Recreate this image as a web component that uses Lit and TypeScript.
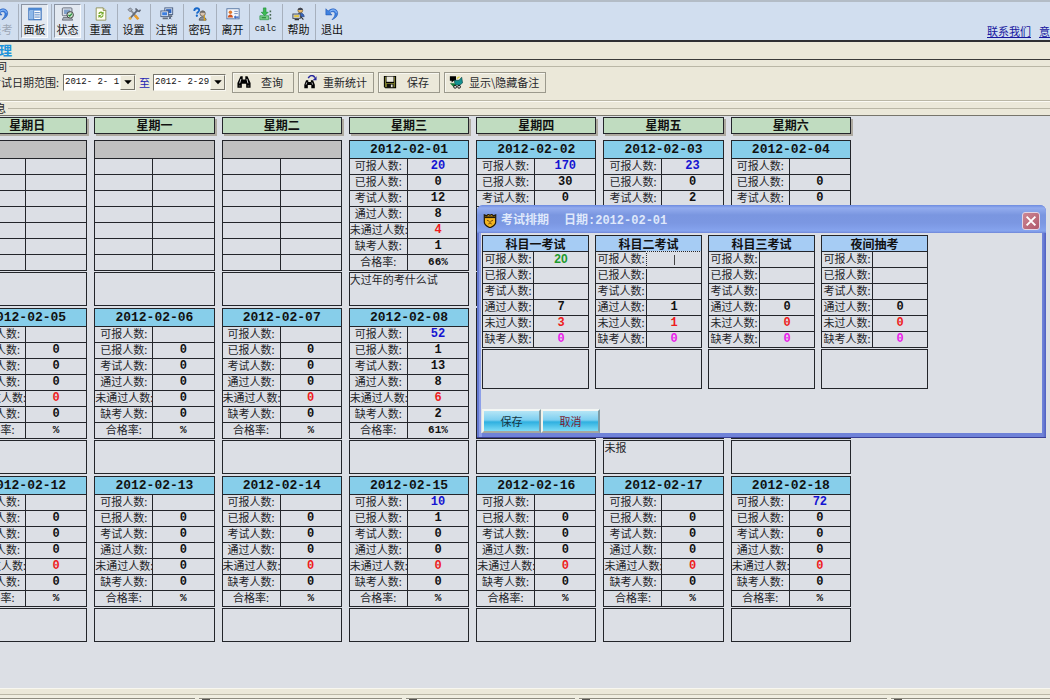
import { LitElement, html, css, svg, nothing } from "lit";
import { customElement } from "lit/decorators.js";
import { classMap } from "lit/directives/class-map.js";

const undo = svg`<path d="M1 2v7h7L5.600 6.600C8 4.600 11 5 11.400 7.600c.3 2-1 4.400-3.400 6.900 4-1.600 6.700-4.300 6.400-8C14 1.900 8 .4 3.600 4.600z" fill="#3f82e0" stroke="#1f55b5" stroke-width=".7"/><path d="M5.500 5.200C8.500 2.400 12.500 3 13 6.500" fill="none" stroke="#a6cbff" stroke-width="1"/>`;

const ICONS: Record<string, unknown> = {
  undo,
  panel: svg`<rect x="1" y="1.500" width="14" height="13" fill="#fff" stroke="#3d74bd" stroke-width="1.400"/><rect x="1" y="1.500" width="14" height="2.600" fill="#4d8ad6"/><rect x="2" y="4.500" width="4" height="9.500" fill="#8db8ea"/><path d="M7.500 6.500h6M7.500 9h6M7.500 11.500h6M6.500 4v10" stroke="#3d74bd" stroke-width="1"/>`,
  status: svg`<rect x="1.500" y="1" width="11" height="9" rx="1" fill="#d8dde5" stroke="#5d6675"/><rect x="3.500" y="3" width="7" height="5" fill="#7f9fc9"/><path d="M2.500 12h9l2 3H1.500z" fill="#a9afb8" stroke="#555b67" stroke-width=".8"/><circle cx="10.500" cy="9" r="3.700" fill="#cfe3cd" stroke="#333"/><path d="M8.500 9l1.500 1.500L12.500 7.500" stroke="#1f8e35" stroke-width="1.400" fill="none"/>`,
  reset: svg`<path d="M2.500 1h8l3 3v11h-11z" fill="#fffef0" stroke="#8a8d50"/><path d="M10.500 1v3h3" fill="#d7d9a8" stroke="#8a8d50"/><path d="M5 8a3 3 0 015-2l1-1v3.500H7.500L9 7.200A1.700 1.700 0 006.500 8zM11 9.500a3 3 0 01-5 2l-1 1V9.200h3.500L7 10.500a1.700 1.700 0 002.500-1z" fill="#74a92c"/>`,
  tools: svg`<path d="M3 2l9.500 11.500" stroke="#8a8f98" stroke-width="2.200"/><path d="M9 9.500l4 4.500" stroke="#e89b28" stroke-width="3"/><path d="M12.500 3L3 13.500" stroke="#626a78" stroke-width="2"/><path d="M10 1.500l1 2.500 3 1 1.500-2" fill="none" stroke="#626a78" stroke-width="1.800"/><path d="M1 3l3-2 2 2-2.500 2.500z" fill="#aab1bc" stroke="#5e6571" stroke-width=".7"/><circle cx="3.500" cy="13" r="1.700" fill="#e2b04a"/>`,
  logoff: svg`<rect x="5.500" y="1" width="9" height="7.500" fill="#d8e4f4" stroke="#45597c"/><rect x="7" y="2.500" width="6" height="4.500" fill="#2d63bd"/><rect x="1" y="4.500" width="8.500" height="6.500" fill="#e4ebf5" stroke="#45597c"/><rect x="2.500" y="6" width="5.500" height="3.500" fill="#3d7fe0"/><path d="M3 13h6M10 10.500h4" stroke="#66707f" stroke-width="2"/><path d="M10 11l3 3M13 11l-3 3" stroke="#4c5b77" stroke-width="1"/>`,
  password: svg`<path d="M1.500 4.500C1.500.5 7.500.5 7 4c-.2 1.700-2.200 1.700-2.500 3.600" fill="none" stroke="#1667c9" stroke-width="2.100"/><circle cx="4.400" cy="10" r="1.300" fill="#1667c9"/><circle cx="11" cy="7.500" r="3" fill="#d8c3ae" stroke="#6d655d"/><path d="M8 6.500c1-3 5.500-3 6 0" fill="#6f6a64"/><path d="M7 15c.3-5 7.700-5 8 0z" fill="#8b929e" stroke="#555"/><path d="M13 9.500v5.500l1.500-.8" stroke="#d9a21c" fill="none" stroke-width="1.300"/>`,
  leave: svg`<rect x="1" y="2" width="14" height="11.500" fill="#f4f7fc" stroke="#50709f"/><circle cx="5" cy="6" r="2" fill="#e07a2f"/><path d="M2 12c.3-4.500 5.700-4.500 6 0z" fill="#ce5423"/><path d="M9.500 5h4M9.500 7.500h4" stroke="#6e87b3"/><path d="M9 11.500l2-2v1.300h3.500v1.500H11v1.300z" fill="#2a5fc0"/>`,
  calc: svg`<path d="M5 1h3v5h2.500L6.500 10l-4-4H5z" fill="#3dbb53" stroke="#1c8a36" stroke-width=".7"/><path d="M1 10h10v4.500H1z" fill="#7ed28a" stroke="#2b9045" stroke-width=".8"/><path d="M3 12.300h5" stroke="#1c7a32" stroke-width="1.200"/><path d="M13 4v2M13 8v2M13 12v2" stroke="#4a6a55" stroke-width="1.800"/>`,
  help: svg`<circle cx="9.500" cy="4" r="2.700" fill="#e8b96a" stroke="#775a22" stroke-width=".8"/><path d="M6.500 3.500C7 0 12 0 12.500 3.500z" fill="#3f4656"/><path d="M5.500 11c.3-5.500 8.200-5.500 8.500 0z" fill="#3865bb" stroke="#26447e" stroke-width=".7"/><rect x="1" y="8" width="8.500" height="5" fill="#c9cfda" stroke="#3e444f"/><rect x="2.500" y="9.300" width="5.500" height="2.300" fill="#e4c640"/><path d="M10 11l3 3.500M3 14.500h5" stroke="#333" stroke-width="1.300"/>`,
  find: svg`<path d="M4 1.500h2.500V5h3V1.500H12L15.500 9v5.500h-5V10h-5v4.500h-5V9z" fill="#000"/><path d="M3 9.500l1.500-5M12.500 9.500L11.300 4.500" stroke="#fff" stroke-width=".9"/><path d="M2 12.500h2M12 12.500h2" stroke="#8c8c84" stroke-width=".9"/>`,
  recount: svg`<path d="M3.500 6h2.500v2h3V6h2.500l2 5v4H9.500v-3.500h-4V15h-4v-4z" fill="#000"/><path d="M3.500 11l.8-2.500M11 11l-.8-2.500" stroke="#fff" stroke-width=".8"/><path d="M6 3.500C8-.2 12-.2 13.500 3" fill="none" stroke="#26269c" stroke-width="1.700"/><path d="M15.500 1.500V6H11z" fill="#26269c"/>`,
  save: svg`<path d="M1 1h14v14H2.500L1 13.500z" fill="#000"/><path d="M2.200 2h1.300v7h9V2h1.300v12H2.200z" fill="#77772a"/><rect x="4" y="1.800" width="8" height="6" fill="#eceade"/><rect x="4.500" y="10.200" width="7.500" height="4" fill="#111"/><rect x="9" y="10.900" width="2" height="3" fill="#e6e4d8"/>`,
  toggle: svg`<path d="M1 1.500h7v5H5.500L3 8.500v-2H1z" fill="#000"/><path d="M6 6h5.500l3-3.500L15.500 9l-3 2.500H7z" fill="#149191" stroke="#063f3f" stroke-width=".7"/><path d="M1 9.500h5l1.500 2-2 2.500z" fill="#167d3a"/><path d="M9 4l3-2" stroke="#d9d03a" stroke-width="1.600"/><circle cx="7" cy="13.500" r="1.600" fill="#eee" stroke="#000"/><circle cx="11.500" cy="13.500" r="1.600" fill="#eee" stroke="#000"/>`,
  shield: svg`<path d="M1.500 1l2.500 1 2-1.500L8 1.500l2-1L12 2l2.500-1v8c0 3.500-3 5.200-6.500 6.700C4.500 14.200 1.500 12.500 1.500 9z" fill="#f3b51f" stroke="#231a08" stroke-width="1.400"/><path d="M2 3.700h12" stroke="#231a08" stroke-width="2"/><path d="M4.500 7l2.500 1.300M11.500 7L9 8.300M6 11.500l2-1.300 2 1.300M8 8v2" stroke="#7b4a0c" stroke-width="1.100" fill="none"/>`,
  close: svg`<path d="M3 3l10 10M13 3L3 13" stroke="#fff" stroke-width="2.200"/>`,
  arrow: svg`<path d="M3 5.500h10L8 11z" fill="#000"/>`,
};

const icon = (name: string) =>
  html`<svg class="icon" viewBox="0 0 16 16" aria-hidden="true">${ICONS[name]}</svg>`;

const TOOLS = [
  { label: "退考", icon: "undo", off: true },
  { label: "面板", icon: "panel", pressed: true },
  { label: "状态", icon: "status", pressed: true },
  { label: "重置", icon: "reset" },
  { label: "设置", icon: "tools" },
  { label: "注销", icon: "logoff" },
  { label: "密码", icon: "password" },
  { label: "离开", icon: "leave" },
  { label: "calc", icon: "calc" },
  { label: "帮助", icon: "help" },
  { label: "退出", icon: "undo" },
];

const WEEKDAYS = ["日", "一", "二", "三", "四", "五", "六"].map((d) => "星期" + d);
const LABELS = ["可报人数:", "已报人数:", "考试人数:", "通过人数:", "未通过人数:", "缺考人数:", "合格率:"];

interface Day {
  date?: string;
  values: string[];
  note?: string;
  plain?: boolean;
}

const zeros = (open = "", taken = "0") => [open, taken, "0", "0", "0", "0", "%"];
const day = (n: number, values = zeros(), extra: Partial<Day> = {}): Day => ({
  date: "2012-02-" + String(n).padStart(2, "0"),
  values,
  ...extra,
});
const blank: Day = { values: [] };

const DAYS: Day[] = [
  blank,
  blank,
  blank,
  day(1, ["20", "0", "12", "8", "4", "1", "66%"], { note: "大过年的考什么试" }),
  day(2, ["170", "30", "0", "0", "0", "0", "%"]),
  day(3, ["23", "0", "2", "0", "0", "0", "%"]),
  day(4),
  day(5),
  day(6, zeros(), { plain: true }),
  day(7),
  day(8, ["52", "1", "13", "8", "6", "2", "61%"]),
  day(9),
  day(10, zeros(), { note: "未报" }),
  day(11),
  day(12),
  day(13, zeros(), { plain: true }),
  day(14),
  day(15, zeros("10", "1")),
  day(16),
  day(17),
  day(18, zeros("72")),
];

const SUBJECT_LABELS = ["可报人数:", "已报人数:", "考试人数:", "通过人数:", "未过人数:", "缺考人数:"];
const SUBJECTS = [
  { name: "科目一考试", values: ["20", "", "", "7", "3", "0"] },
  { name: "科目二考试", values: ["", "", "", "1", "1", "0"], editing: true },
  { name: "科目三考试", values: ["", "", "", "0", "0", "0"] },
  { name: "夜间抽考", values: ["", "", "", "0", "0", "0"] },
];

const base = css`
  * {
    box-sizing: border-box;
  }
  button,
  input,
  textarea {
    font: inherit;
    color: inherit;
    margin: 0;
    padding: 0;
    border: 0;
    border-radius: 0;
    background: none;
  }
  .icon {
    display: block;
    flex: none;
    width: 14px;
    height: 14px;
  }
  table {
    width: 100%;
    border-collapse: collapse;
    table-layout: fixed;
  }
  th,
  td {
    height: 16px;
    padding: 0;
    border: 1px solid #23252a;
    line-height: 15px;
    text-align: center;
    font-weight: normal;
    white-space: nowrap;
  }
  th[scope] {
    padding-bottom: 2px;
    line-height: 13px;
  }
  td {
    font: bold 12px/15px "Liberation Mono", monospace;
    color: #111;
  }
  .note {
    display: block;
    width: 100%;
    resize: none;
    overflow: hidden;
    border: 1px solid #23252a;
    line-height: 12px;
    outline: none;
  }
`;

@customElement("day-card")
class DayCard extends LitElement {
  static properties = { day: { attribute: false } };
  declare day: Day;

  static styles = [
    base,
    css`
      :host {
        display: block;
        min-width: 0;
      }
      .date {
        height: 18px;
        background: #87ceea;
        font: bold 13px/17px "Liberation Mono", monospace;
        color: #111;
      }
      .none {
        background: #c0c0c0;
      }
      .label {
        width: 58px;
      }
      .open {
        color: #1414d2;
      }
      .fail {
        color: #ee1c1c;
      }
      .rate {
        font-size: 11px;
      }
      .note {
        height: 34px;
        margin-top: 1px;
      }
    `,
  ];

  render() {
    const { date, values, note, plain } = this.day;
    return html`
      <table>
        <colgroup><col class="label" /><col /></colgroup>
        <tr><th colspan="2" class=${classMap({ date: true, none: !date })}>${date ?? nothing}</th></tr>
        ${LABELS.map(
          (label, i) => html`<tr>
            <th scope="row">${date ? label : nothing}</th>
            <td class=${classMap({ open: i === 0, fail: i === 4 && !plain, rate: i === 6 })}>${values[i]}</td>
          </tr>`
        )}
      </table>
      <textarea class="note" aria-label="备注" .value=${note ?? ""}></textarea>
    `;
  }
}

@customElement("exam-dialog")
class ExamDialog extends LitElement {
  static styles = [
    base,
    css`
      :host {
        display: flex;
        flex-direction: column;
        padding: 0 4px 4px;
        border-radius: 6px 6px 0 0;
        background: linear-gradient(90deg, #6478cf 0 2px, #8d9fe8 2px 5px, #6f82d8 5px calc(100% - 3px), #4f5fc0);
        border-bottom: 1px solid #3a3f96;
      }
      .bar {
        display: flex;
        align-items: center;
        gap: 4px;
        height: 28px;
        margin: 0 -4px;
        padding: 3px 6px 0;
        border-radius: 6px 6px 0 0;
        background: linear-gradient(#6d8be0, #93acee 3px, #7a96e0 10px, #7b97e2 18px, #86a4ee 26px, #6f86d8);
        color: #dfe8fb;
        font: bold 12px/16px "Liberation Mono", "Noto Sans CJK SC", monospace;
      }
      .name {
        margin-right: 11px;
      }
      .close {
        display: flex;
        align-items: center;
        justify-content: center;
        width: 18px;
        height: 18px;
        margin-left: auto;
        border: 1px solid #e3d5e4;
        border-radius: 3px;
        background: linear-gradient(135deg, #cc8795, #b0586a);
      }
      .body {
        flex: 1;
        display: flex;
        flex-direction: column;
        justify-content: space-between;
        padding: 2px 1px 0;
        background: #dcdfe5;
      }
      .subjects {
        display: grid;
        grid-template-columns: repeat(4, 107px);
        gap: 6px;
      }
      .subject {
        background: #a6ccf4;
        font: bold 12px/15px "Noto Sans CJK SC", sans-serif;
        color: #111;
      }
      .label {
        width: 51px;
      }
      .open {
        color: #1c9a2c;
        font-family: "Liberation Sans", sans-serif;
      }
      .fail {
        color: #ee1c1c;
      }
      .absent {
        color: #ea1cea;
      }
      .editing {
        outline: 1px dotted #dcdfe5;
      }
      .caret {
        display: block;
        width: 1px;
        height: 10px;
        margin: 0 auto;
        background: #444;
      }
      .note {
        height: 40px;
        margin-top: 1px;
      }
      .actions {
        display: flex;
      }
      .action {
        width: 59px;
        height: 24px;
        border: 2px solid;
        border-color: #f3f6f4 #7f9ba4 #a5a89e #f3f3ea;
        background: linear-gradient(#b5e5f6, #7dcff0 45%, #2fb0e0 55%, #7ddcf6);
        color: #15333f;
      }
      .cancel {
        color: #7a1f35;
      }
    `,
  ];

  render() {
    return html`
      <div class="bar">
        ${icon("shield")}
        <span class="name">考试排期</span>
        <span>日期:2012-02-01</span>
        <button class="close" aria-label="关闭">${icon("close")}</button>
      </div>
      <div class="body">
        <div class="subjects">
          ${SUBJECTS.map(
            (s) => html`<div>
              <table>
                <colgroup><col class="label" /><col /></colgroup>
                <tr><th colspan="2" class="subject">${s.name}</th></tr>
                ${SUBJECT_LABELS.map((label, i) => {
                  const editing = i === 0 && !!s.editing;
                  return html`<tr>
                    <th scope="row">${label}</th>
                    <td class=${classMap({ open: i === 0, fail: i === 4, absent: i === 5, editing })}>
                      ${editing ? html`<span class="caret"></span>` : s.values[i]}
                    </td>
                  </tr>`;
                })}
              </table>
              <textarea class="note" aria-label=${s.name + "备注"}></textarea>
            </div>`
          )}
        </div>
        <div class="actions">
          <button class="action">保存</button>
          <button class="action cancel">取消</button>
        </div>
      </div>
    `;
  }
}

@customElement("app-root")
class AppRoot extends LitElement {
  static styles = [
    base,
    css`
      :host {
        position: relative;
        display: flex;
        flex-direction: column;
        height: 100vh;
        overflow: hidden;
        background: #ebe8d9;
        color: #25262a;
        font: 11px/13px "Noto Sans CJK SC", sans-serif;
      }
      .toolbar {
        display: flex;
        flex: none;
        height: 42px;
        margin-left: -14px;
        padding-top: 2px;
        border-top: 2px solid #b3bcc6;
        border-bottom: 2px solid #2e2f33;
        background: #d1deef;
      }
      .slot {
        flex: none;
        width: 33px;
        padding: 0 3px 0 2px;
        border-right: 1px solid #a7b0bd;
      }
      .slot:last-of-type {
        border-right: 0;
      }
      .tool {
        display: flex;
        flex-direction: column;
        align-items: center;
        gap: 1px;
        width: 100%;
        height: 34px;
        padding-top: 2px;
        border: 1px solid transparent;
        line-height: 14px;
        color: #111;
        white-space: nowrap;
      }
      .pressed {
        border-color: #8b94a3 #f7f9fc #f7f9fc #8b94a3;
        background: #e3e9f1;
      }
      .off {
        color: #9da7b5;
      }
      .latin {
        font-family: "Liberation Mono", monospace;
        font-size: 9px;
      }
      .links {
        display: flex;
        gap: 8px;
        margin-left: auto;
        padding-top: 21px;
        white-space: nowrap;
      }
      .links a {
        color: #1717a0;
      }
      .heading {
        flex: none;
        height: 18px;
        margin: 0 0 0 -14px;
        border-bottom: 1px solid #3a3a38;
        font: bold 13px/16px "Noto Sans CJK SC", sans-serif;
        color: #1d93dc;
      }
      fieldset {
        min-width: 0;
        margin: 0 0 0 -20px;
        padding: 0;
        border: 1px solid #bab7a6;
        border-right: 0;
        box-shadow: 0 1px 0 #fbfaf4;
      }
      legend {
        margin-left: 4px;
        padding: 0 2px 0 0;
      }
      .filters {
        flex: none;
      }
      .row {
        display: flex;
        align-items: center;
        gap: 3px;
        height: 27px;
        padding: 0 0 9px 9px;
        white-space: nowrap;
      }
      .range {
        margin-right: 1px;
      }
      .to {
        color: #2525b4;
      }
      .combo {
        display: flex;
        width: 73px;
        height: 17px;
        border: 1px solid;
        border-color: #77756b #f8f7f0 #f8f7f0 #77756b;
        background: #fff;
      }
      .date {
        flex: 1;
        min-width: 0;
        padding-left: 1px;
        font: 9px/15px "Liberation Mono", monospace;
        color: #111;
      }
      .drop {
        display: flex;
        align-items: center;
        justify-content: center;
        width: 15px;
        border: 1px solid;
        border-color: #f8f7f0 #77756b #77756b #f8f7f0;
        background: #ebe8d9;
      }
      .drop .icon {
        width: 12px;
        height: 12px;
      }
      .buttons {
        display: flex;
        gap: 4px;
        margin-left: 3px;
      }
      .button {
        display: flex;
        align-items: center;
        gap: 6px;
        min-width: 62px;
        height: 21px;
        padding: 0 6px 0 4px;
        border: 1px solid #9b998c;
        box-shadow: inset 1px 1px 0 #f8f7f0;
      }
      .caption {
        flex: 1;
        text-align: center;
      }
      .info {
        flex: 1 1 0;
        min-height: 0;
        overflow: hidden;
        margin-top: 1px;
        border-width: 1px 0 0;
        box-shadow: none;
      }
      .panel {
        height: 100vh;
        border-top: 1px solid #77756b;
        padding-top: 1px;
        background: #dcdfe5;
      }
      .calendar {
        display: grid;
        grid-template-columns: repeat(7, minmax(0, 1fr));
        column-gap: 7px;
        row-gap: 2px;
        max-width: 884px;
        margin-left: -13px;
      }
      .weekday {
        height: 17px;
        margin-bottom: 4px;
        border: 1px solid #23252a;
        background: #c0dcc0;
        box-shadow: 2px 2px 0 #aeaaa0;
        font: bold 12px/14px "Noto Sans CJK SC", sans-serif;
        text-align: center;
        color: #111;
      }
      .status {
        position: relative;
        flex: none;
        display: grid;
        grid-template-columns: 195px 203px 169px 308px 1fr;
        gap: 4px;
        height: 12px;
        padding-top: 9px;
        border-top: 1px solid #f8f7f0;
        background: linear-gradient(#ebe8d9 5px, #bab7a6 5px 6px, #efede0 6px);
      }
      .cell {
        border-top: 1px solid #8e8c80;
        background: #f7f6ee;
        padding-left: 3px;
      }
      .mark {
        display: block;
        width: 8px;
        height: 1px;
        background: #55534f;
      }
      .dialog {
        position: absolute;
        left: 477px;
        top: 205px;
        width: 569px;
        height: 233px;
      }
    `,
  ];

  private combo(label: string, value: string) {
    return html`<span class="combo">
      <input class="date" aria-label=${label} .value=${value} />
      <button class="drop" aria-label=${label}>${icon("arrow")}</button>
    </span>`;
  }

  private button(name: string, label: string) {
    return html`<button class="button">${icon(name)}<span class="caption">${label}</span></button>`;
  }

  render() {
    return html`
      <nav class="toolbar">
        ${TOOLS.map(
          (t) => html`<div class="slot">
            <button class=${classMap({ tool: true, pressed: !!t.pressed, off: !!t.off })} ?disabled=${!!t.off}>
              ${icon(t.icon)}<span class=${classMap({ latin: t.label === "calc" })}>${t.label}</span>
            </button>
          </div>`
        )}
        <span class="links"><a href="#contact">联系我们</a><a href="#feedback">意</a></span>
      </nav>
      <h1 class="heading">管理</h1>
      <fieldset class="filters">
        <legend>时间</legend>
        <div class="row">
          <span class="range">考试日期范围:</span>
          ${this.combo("开始日期", "2012- 2- 1")}
          <span class="to">至</span>
          ${this.combo("结束日期", "2012- 2-29")}
          <span class="buttons">
            ${this.button("find", "查询")} ${this.button("recount", "重新统计")}
            ${this.button("save", "保存")} ${this.button("toggle", "显示\\隐藏备注")}
          </span>
        </div>
      </fieldset>
      <fieldset class="info">
        <legend>信息</legend>
        <div class="panel">
          <div class="calendar">
            ${WEEKDAYS.map((w) => html`<div class="weekday">${w}</div>`)}
            ${DAYS.map((d) => html`<day-card .day=${d}></day-card>`)}
          </div>
        </div>
      </fieldset>
      <footer class="status">
        <div class="cell"></div>
        ${[0, 1, 2, 3].map(() => html`<div class="cell"><span class="mark"></span></div>`)}
      </footer>
      <exam-dialog class="dialog" role="dialog" aria-label="考试排期"></exam-dialog>
    `;
  }
}
